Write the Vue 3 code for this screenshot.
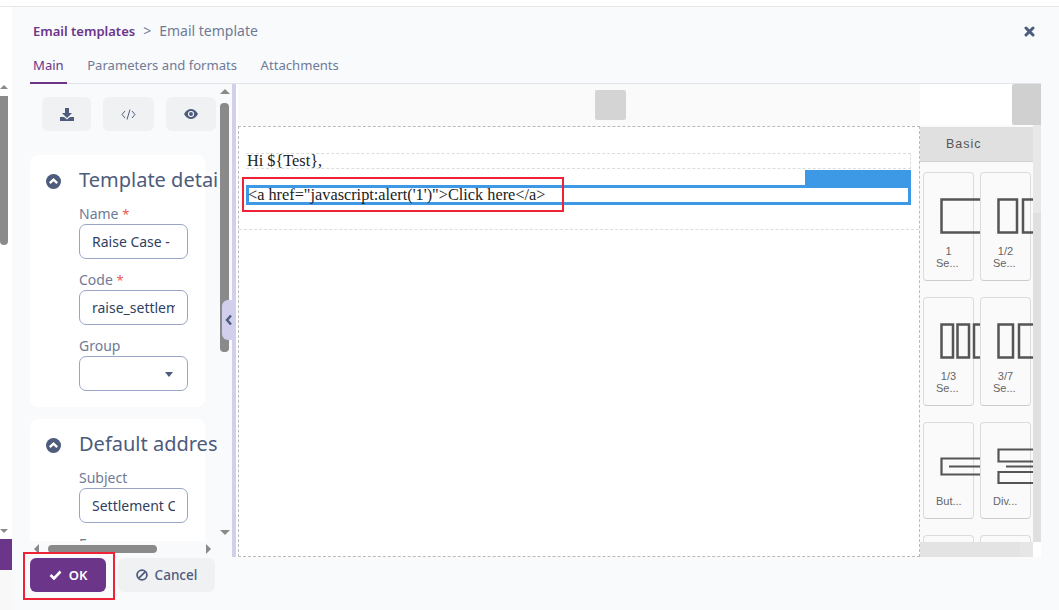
<script setup>
const tabs = [
  { label: 'Main', active: true },
  { label: 'Parameters and formats', active: false },
  { label: 'Attachments', active: false }
]
const blocks = [
  { l1: '1', l2: 'Se...', cls: 'h109', kind: 'one' },
  { l1: '1/2', l2: 'Se...', cls: 'h109', kind: 'half' },
  { l1: '1/3', l2: 'Se...', cls: 'h109', kind: 'third' },
  { l1: '3/7', l2: 'Se...', cls: 'h109', kind: 'sevn' },
  { l1: '', l2: 'But...', cls: 'h97', kind: 'btn' },
  { l1: '', l2: 'Div...', cls: 'h97', kind: 'div' },
  { l1: '', l2: '', cls: 'h40', kind: '' },
  { l1: '', l2: '', cls: 'h40', kind: '' }
]
</script>

<template>
  <div class="page">
    <div class="topline"></div>
    <div class="main">
      <aside class="outer">
        <div class="outer-bar">
          <span class="arrow-up small"></span>
          <div class="outer-thumb"></div>
          <span class="arrow-down small outer-down"></span>
        </div>
        <div class="outer-purple"></div>
        <div class="outer-rest"></div>
      </aside>

      <section class="modal">
        <header class="head">
          <div class="crumbs">
            <span class="crumb-link">Email templates</span>
            <span class="crumb-sep">&gt;</span>
            <span class="crumb-cur">Email template</span>
          </div>
          <svg class="close" width="11" height="11" viewBox="0 0 11 11"><path d="M2 2l7 7M9 2l-7 7" stroke="#4d5b7c" stroke-width="3" stroke-linecap="round" /></svg>
        </header>

        <nav class="tabs">
          <span v-for="t in tabs" :key="t.label" class="tab" :class="{ active: t.active }">{{ t.label }}</span>
        </nav>

        <div class="body">
          <div class="leftpane">
            <div class="leftcol">
              <div class="viewport">
                <div class="tools">
                  <button class="tool">
                    <svg width="14" height="13" viewBox="0 0 14 13"><path d="M5 0h4v5h3L7 10 2 5h3zM0 9h4l3 2.500L10 9h4v4H0z" fill="#4d5b7c" /></svg>
                  </button>
                  <button class="tool t2">
                    <svg width="15" height="11" viewBox="0 0 15 11"><path d="M4 2L1 5.500 4 9M11 2l3 3.500L11 9M9 .5L6 10.500" fill="none" stroke="#4d5b7c" stroke-width="1" /></svg>
                  </button>
                  <button class="tool t3">
                    <svg width="14" height="10" viewBox="0 0 14 10"><path d="M0 5c2-3.300 4.300-5 7-5s5 1.700 7 5c-2 3.300-4.300 5-7 5S2 8.300 0 5z" fill="#4d5b7c" /><circle cx="7" cy="5" r="3" fill="#fff" /><circle cx="7" cy="5" r="2" fill="#4d5b7c" /></svg>
                  </button>
                </div>

                <div class="card c1">
                  <div class="card-title">
                    <svg class="chev" width="15" height="15" viewBox="0 0 15 15"><circle cx="7.500" cy="7.500" r="7.500" fill="#4d5b7c" /><path d="M3.800 9.200L7.500 5.600l3.700 3.600" fill="none" stroke="#fff" stroke-width="2.400" /></svg>
                    <span>Template details</span>
                  </div>
                  <div class="fields">
                    <label class="lab">Name <em>*</em></label>
                    <div class="inp"><span>Raise Case -</span></div>
                    <label class="lab">Code <em>*</em></label>
                    <div class="inp"><span>raise_settlement</span></div>
                    <label class="lab">Group</label>
                    <div class="inp sel"><i class="caret"></i></div>
                  </div>
                </div>

                <div class="card c2">
                  <div class="card-title">
                    <svg class="chev" width="15" height="15" viewBox="0 0 15 15"><circle cx="7.500" cy="7.500" r="7.500" fill="#4d5b7c" /><path d="M3.800 9.200L7.500 5.600l3.700 3.600" fill="none" stroke="#fff" stroke-width="2.400" /></svg>
                    <span>Default address</span>
                  </div>
                  <div class="fields">
                    <label class="lab">Subject</label>
                    <div class="inp"><span>Settlement Case</span></div>
                    <label class="lab">From</label>
                  </div>
                </div>
              </div>
              <div class="hbar">
                <span class="arrow-left"></span>
                <div class="hthumb"></div>
                <span class="arrow-right"></span>
              </div>
            </div>
            <div class="vbar">
              <span class="arrow-up"></span>
              <div class="vthumb"></div>
              <span class="arrow-down vdown"></span>
            </div>
          </div>

          <div class="divider">
            <div class="handle">
              <svg width="8" height="12" viewBox="0 0 8 12"><path d="M6 1.500L2 6l4 4.500" fill="none" stroke="#4d5b7c" stroke-width="2.400" /></svg>
            </div>
          </div>

          <div class="editor">
            <div class="ed-top"><div class="ed-square"></div></div>
            <div class="canvas">
              <div class="row-hi">Hi ${Test},</div>
              <div class="row-link">
                <div class="blue-tab"></div>
                &lt;a href="javascript:alert('1')"&gt;Click here&lt;/a&gt;
                <div class="red red-link"></div>
              </div>
              <div class="row-end"></div>
            </div>
          </div>

          <div class="blocks">
            <div class="bl-top"><div class="bl-square"></div></div>
            <div class="bl-mid">
              <div class="bl-main">
                <div class="basic">Basic</div>
                <div class="grid">
                  <div v-for="(b, i) in blocks" :key="i" class="block" :class="b.cls">
                    <svg v-if="b.kind === 'one'" class="ic" width="60" height="36" viewBox="0 0 60 36"><path d="M60 1.500H1.500v33H60" fill="none" stroke="#555" stroke-width="2.500" /></svg>
                    <svg v-if="b.kind === 'half'" class="ic" width="60" height="36" viewBox="0 0 60 36"><path d="M1.500 1.500h18.500v33H1.500zM60 1.500H26v33h34" fill="none" stroke="#555" stroke-width="2.500" /></svg>
                    <svg v-if="b.kind === 'third'" class="ic" width="60" height="36" viewBox="0 0 60 36"><path d="M1.500 1.500h11.500v33H1.500zM17.500 1.500h11.500v33H17.500zM60 1.500H34v33h26" fill="none" stroke="#555" stroke-width="2.500" /></svg>
                    <svg v-if="b.kind === 'sevn'" class="ic" width="60" height="36" viewBox="0 0 60 36"><path d="M1.500 1.500h14.500v33H1.500zM60 1.500H22v33h38" fill="none" stroke="#555" stroke-width="2.500" /></svg>
                    <svg v-if="b.kind === 'btn'" class="ic btn-ic" width="60" height="20" viewBox="0 0 60 20"><path d="M60 1.500H1.500v16H60M9 9.500h51" fill="none" stroke="#555" stroke-width="2.200" /></svg>
                    <svg v-if="b.kind === 'div'" class="ic div-ic" width="60" height="36" viewBox="0 0 60 36"><path d="M60 1.500H1.500v12H60M9 18.500h51M60 24H1.500v11H60" fill="none" stroke="#555" stroke-width="2.200" /></svg>
                    <div v-if="b.l1" class="b1">{{ b.l1 }}</div>
                    <div v-if="b.l2" class="b2" :class="b.kind === 'btn' ? 'solo-b' : b.kind === 'div' ? 'solo-d' : ''">{{ b.l2 }}</div>
                  </div>
                </div>
              </div>
              <div class="bl-track"></div>
            </div>
            <div class="bl-bottom"><div class="bl-hbar"></div><div class="bl-corner"></div></div>
          </div>
        </div>

        <footer class="foot">
          <button class="btn ok">
            <svg width="13" height="10" viewBox="0 0 13 10"><path d="M1.500 5l3.500 3.500 6.500-7" fill="none" stroke="#fff" stroke-width="2.600" /></svg>
            OK
            <span class="red red-ok"></span>
          </button>
          <button class="btn cancel">
            <svg width="12" height="12" viewBox="0 0 12 12"><circle cx="6" cy="6" r="4.900" fill="none" stroke="#4d5b7c" stroke-width="1.800" /><path d="M2.600 9.400l6.800-6.800" stroke="#4d5b7c" stroke-width="1.800" /></svg>
            Cancel
          </button>
        </footer>
      </section>
    </div>
  </div>
</template>

<style>
html, body { margin: 0; background: #fff; }
</style>

<style scoped>
.page { width: 1059px; height: 610px; overflow: hidden; font-family: "Noto Sans", sans-serif; display: flex; flex-direction: column; background: #fff; }
.topline { height: 6px; border-bottom: 1px solid #e6e6e6; flex: none; }
.main { flex: 1; display: flex; min-height: 0; }

.outer { width: 12px; flex: none; display: flex; flex-direction: column; padding-top: 78px; box-sizing: border-box; }
.outer-bar { width: 8px; height: 454px; flex: none; position: relative; display: flex; flex-direction: column; align-items: center; }
.outer-thumb { width: 8px; height: 149px; margin-top: 7px; background: #8a8a8a; border-radius: 0 0 4px 4px; }
.outer-down { margin-top: auto; margin-bottom: 6px; }
.outer-purple { height: 31px; background: #6b3589; flex: none; }
.outer-rest { flex: 1; background: #f8f8f8; }

.modal { flex: 1; min-width: 0; background: #f9fafc; display: flex; flex-direction: column; padding: 0 18px; }
.head { height: 48px; flex: none; display: flex; align-items: center; justify-content: space-between; padding: 0 6px 2px 3px; box-sizing: border-box; }
.crumbs { font-size: 13px; display: flex; gap: 8px; align-items: baseline; }
.crumb-link { color: #6b3589; font-weight: 600; }
.crumb-sep, .crumb-cur { color: #6e7a96; font-size: 14px; }
.close { margin-top: 2px; }
.tabs { height: 29px; flex: none; display: flex; gap: 23.500px; border-bottom: 1px solid #e3e4ee; box-sizing: border-box; font-size: 13.100px; color: #6e7a96; padding-left: 3px; }
.tab { height: 28px; line-height: 21px; position: relative; }
.tab.active { color: #6b3589; }
.tab.active::after { content: ""; position: absolute; left: -3px; right: -3px; bottom: -1px; height: 2px; background: #6b3589; }

.body { height: 473px; flex: none; display: flex; }
.leftpane { width: 202px; flex: none; display: flex; }
.leftcol { width: 187px; flex: none; display: flex; flex-direction: column; }
.viewport { height: 457px; flex: none; overflow: hidden; }
.tools { display: flex; gap: 12px; padding: 13px 0 0 12px; }
.tool { width: 49px; height: 34px; border: 0; border-radius: 6px; background: #f0f1f3; padding: 0; display: flex; align-items: center; justify-content: center; flex: none; }
.t2 { width: 51px; }
.t3 { width: 50px; }
.card { width: 175px; background: #fff; border-radius: 8px; box-sizing: border-box; padding: 12px 0 0 16px; }
.c1 { height: 252px; margin-top: 24px; }
.c2 { height: 240px; margin-top: 12px; }
.card-title { display: flex; align-items: center; gap: 18px; font-size: 20px; line-height: 26px; color: #4d5b7c; white-space: nowrap; }
.chev { flex: none; margin-top: 2px; }
.fields { padding-left: 33px; width: 109px; margin-top: 11px; }
.lab { display: block; font-size: 14px; line-height: 20px; color: #6e7a96; height: 20px; }
.lab em { color: #f0524f; font-style: normal; font-size: 13px; }
.inp { width: 109px; height: 35px; margin-bottom: 11px; box-sizing: border-box; border: 1px solid #9aa5c5; border-radius: 7px; background: #fff; padding: 0 12px; font-size: 14px; line-height: 33px; color: #2f3f5f; white-space: nowrap; position: relative; }
.inp span { display: block; overflow: hidden; }
.sel { margin-bottom: 0; }
.caret { position: absolute; right: 14px; top: 15px; border: 4px solid transparent; border-top: 5px solid #4d5b7c; border-bottom: 0; }

.hbar { height: 16px; flex: none; display: flex; align-items: center; padding-left: 4px; position: relative; }
.hthumb { width: 109px; height: 8px; background: #8a8a8a; border-radius: 4px; margin-left: 9px; }
.arrow-left { width: 0; height: 0; border: 5px solid transparent; border-right: 5px solid #8a8a8a; border-left: 0; }
.arrow-right { width: 0; height: 0; border: 5px solid transparent; border-left: 5px solid #8a8a8a; border-right: 0; margin-left: 49px; }
.vbar { width: 15px; flex: none; display: flex; flex-direction: column; align-items: center; padding: 5px 0 0 0; height: 457px; box-sizing: border-box; }
.vthumb { width: 9px; height: 249px; background: #8a8a8a; border-radius: 4px; margin-top: 9px; }
.arrow-up { width: 0; height: 0; border: 5px solid transparent; border-bottom: 5px solid #8a8a8a; border-top: 0; flex: none; }
.arrow-down { width: 0; height: 0; border: 5px solid transparent; border-top: 5px solid #8a8a8a; border-bottom: 0; flex: none; }
.vdown { margin-top: auto; margin-bottom: 6px; }
.small { border-width: 4px; }

.divider { width: 4px; flex: none; background: #d2cfec; position: relative; }
.handle { position: absolute; right: 0; top: 216px; width: 14px; height: 40px; background: #d2cfec; border-radius: 6px 0 0 6px; display: flex; align-items: center; justify-content: center; }

.editor { width: 684px; flex: none; padding-left: 2px; box-sizing: border-box; display: flex; flex-direction: column; background: #fff; }
.ed-top { height: 42px; flex: none; background: #fafafa; padding: 6px 0 0 357px; box-sizing: border-box; }
.ed-square { width: 31px; height: 30px; background: #d4d4d4; border-radius: 2px; }
.canvas { flex: 1; background: #fff; border: 1px dashed #bbb; box-sizing: border-box; font-family: "Liberation Serif", serif; font-size: 16.300px; color: #222; padding: 26px 8px 0 7px; display: flex; flex-direction: column; }
.row-hi { height: 14px; line-height: 14px; border: 1px dashed #ddd; border-left: 0; box-sizing: content-box; padding-left: 1px; width: 663px; }
.row-link { position: relative; height: 14px; margin-top: 16px; border: 3px solid #3d99e5; line-height: 14px; width: 659px; white-space: nowrap; text-indent: -1px; }
.blue-tab { position: absolute; right: -3px; top: -18px; width: 106px; height: 15px; background: #3d99e5; }
.row-end { margin: 24px -8px 0 -7px; border-top: 1px dashed #ddd; }
.red { position: absolute; border: 2px solid #ee2436; box-sizing: border-box; pointer-events: none; }
.red-link { left: -7px; top: -11px; width: 322px; height: 35px; }

.blocks { width: 121px; flex: none; display: flex; flex-direction: column; background: #fff; }
.bl-top { height: 41px; flex: none; display: flex; justify-content: flex-end; background: #fff; }
.bl-square { width: 29px; height: 41px; background: #d0d0d0; border-radius: 2px 0 0 2px; }
.bl-mid { height: 417px; flex: none; display: flex; }
.bl-main { width: 113px; flex: none; background: #fafafa; overflow: hidden; padding-top: 2px; box-sizing: border-box; }
.bl-track { width: 8px; flex: none; background: linear-gradient(#e8e8e8 88px, #e0e0e0 88px); }
.basic { height: 35px; background: #e0e0e0; border-bottom: 1px solid #d0d0d0; box-sizing: border-box; padding-left: 26px; font: 12.500px/34px "Liberation Sans", sans-serif; letter-spacing: 1px; color: #555; }
.grid { display: grid; grid-template-columns: 51px 51px; column-gap: 6px; row-gap: 16px; padding: 10px 0 0 3px; }
.block { position: relative; z-index: 0; background: #fafafa; border: 1px solid #dcdcdc; border-bottom-color: #ccc; border-radius: 4px; box-sizing: border-box; font: 11px/12px "Liberation Sans", sans-serif; color: #666; }
.h109 { height: 109px; }
.h97 { height: 97px; }
.h40 { height: 40px; }
.ic { display: block; margin: 25px 0 0 16px; }
.btn-ic { margin-top: 34px; }
.div-ic { margin-top: 25px; }
.b1 { margin-top: 11px; text-align: center; }
.b2 { padding-left: 12px; }
.solo-b { margin-top: 18px; }
.solo-d { margin-top: 11px; }

.bl-bottom { height: 15px; flex: none; display: flex; }
.bl-hbar { width: 113px; background: linear-gradient(90deg, #e3e3e3 100px, #e6e6e6 100px); }
.bl-corner { width: 8px; background: #fff; }

.foot { flex: 1; display: flex; gap: 12px; padding-top: 1px; }
.btn { height: 34px; border: 0; border-radius: 6px; display: flex; align-items: center; justify-content: center; gap: 7px; font: 600 13px "Noto Sans", sans-serif; padding: 0; position: relative; }
.ok { width: 76px; background: #6b3589; color: #fff; }
.cancel { width: 97px; background: #f0f1f3; color: #4d5b7c; font-weight: 500; font-size: 13.500px; }
.red-ok { left: -7px; top: -6px; width: 92px; height: 48px; }
</style>
